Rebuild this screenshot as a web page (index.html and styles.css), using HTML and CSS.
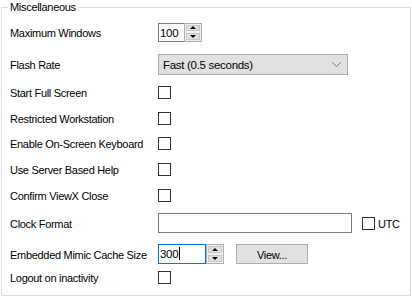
FILE: index.html
```html
<!DOCTYPE html>
<html lang="en">
<head>
    <meta charset="UTF-8">
    <meta name="viewport" content="width=device-width, initial-scale=1.0">
    <title>Miscellaneous</title>
    <link rel="stylesheet" href="styles.css">
</head>
<body>
    <fieldset class="group">
        <legend>Miscellaneous</legend>
        <div class="rows">
            <div class="row">
                <span class="label">Maximum Windows</span>
                <div class="spin">
                    <span class="spin-text">100</span>
                    <span class="spin-buttons">
                        <span class="spin-btn"><i class="arrow-up"></i></span>
                        <span class="spin-btn"><i class="arrow-down"></i></span>
                    </span>
                </div>
            </div>
            <div class="row">
                <span class="label">Flash Rate</span>
                <div class="combo">
                    <span>Fast (0.5 seconds)</span>
                    <svg class="chevron" width="9" height="5" viewBox="0 0 9 5"><polyline points="0.5,0.5 4.5,4.5 8.5,0.5" fill="none" stroke="#707070" stroke-width="1"/></svg>
                </div>
            </div>
            <div class="row">
                <span class="label">Start Full Screen</span>
                <span class="check"></span>
            </div>
            <div class="row">
                <span class="label">Restricted Workstation</span>
                <span class="check"></span>
            </div>
            <div class="row">
                <span class="label">Enable On-Screen Keyboard</span>
                <span class="check"></span>
            </div>
            <div class="row">
                <span class="label">Use Server Based Help</span>
                <span class="check"></span>
            </div>
            <div class="row">
                <span class="label">Confirm ViewX Close</span>
                <span class="check"></span>
            </div>
            <div class="row">
                <span class="label">Clock Format</span>
                <span class="textbox"></span>
                <span class="check check-utc"></span>
                <span class="check-label">UTC</span>
            </div>
            <div class="row">
                <span class="label">Embedded Mimic Cache Size</span>
                <div class="spin spin-wide">
                    <span class="spin-text focused">300<span class="caret"></span></span>
                    <span class="spin-buttons">
                        <span class="spin-btn"><i class="arrow-up"></i></span>
                        <span class="spin-btn"><i class="arrow-down"></i></span>
                    </span>
                </div>
                <button class="btn">View...</button>
            </div>
            <div class="row">
                <span class="label">Logout on inactivity</span>
                <span class="check"></span>
            </div>
        </div>
    </fieldset>
</body>
</html>
```

FILE: styles.css
```css
body {
    margin: 0;
    background: #ffffff;
    font-family: "Liberation Sans", Arial, sans-serif;
    font-size: 11px;
    letter-spacing: -0.3px;
    color: #000000;
}
.group {
    box-sizing: border-box;
    width: 410px;
    height: 295px;
    margin: 1px 0 0 1px;
    padding: 8px 6px 0 6px;
    border: 1px solid #dcdcdc;
}
.group legend {
    padding: 0 2px;
    line-height: 13px;
}
.rows {
    display: grid;
    grid-template-rows: 32px 28px 26px 25px 26px 26px 28px 31px 23px 20px;
    padding-left: 2px;
}
.row {
    display: flex;
    align-items: center;
    height: 20px;
    align-self: start;
}
.label {
    width: 148px;
    flex: none;
    line-height: 20px;
    padding-top: 2px;
}
.spin {
    display: flex;
    box-sizing: border-box;
    width: 44px;
    height: 19px;
    border: 1px solid #7a7a7a;
}
.spin-text {
    flex: 1;
    line-height: 17px;
    padding-left: 1px;
    padding-top: 1px;
    font-size: 11.5px;
}
.spin-buttons {
    display: flex;
    flex-direction: column;
    width: 16px;
    margin: -1px -1px -1px 0;
    border: 1px solid #adadad;
    background: #f0f0f0;
}
.spin-btn {
    flex: 1;
    display: flex;
    align-items: center;
    justify-content: center;
    margin: 1px;
    background: #e1e1e1;
    border: 1px solid #c8c8c8;
}
.arrow-up {
    width: 0;
    height: 0;
    border-left: 3px solid transparent;
    border-right: 3px solid transparent;
    border-bottom: 3px solid #000000;
}
.arrow-down {
    width: 0;
    height: 0;
    border-left: 3px solid transparent;
    border-right: 3px solid transparent;
    border-top: 3px solid #000000;
}
.spin-wide {
    width: 66px;
    height: 20px;
    border: none;
}
.spin-wide .spin-text {
    border: 1px solid #0078d7;
    line-height: 18px;
    padding-top: 0;
}
.spin-wide .spin-buttons {
    margin: 0;
}
.caret {
    display: inline-block;
    width: 1px;
    height: 13px;
    margin-left: 1px;
    vertical-align: -2px;
    background: #000000;
}
.combo {
    display: flex;
    align-items: center;
    justify-content: space-between;
    box-sizing: border-box;
    width: 190px;
    height: 21px;
    padding: 1px 6px 0 4px;
    background: #e1e1e1;
    border: 1px solid #adadad;
    font-size: 11.5px;
}
.check {
    box-sizing: border-box;
    width: 13px;
    height: 13px;
    border: 1px solid #333333;
    background: #ffffff;
}
.textbox {
    box-sizing: border-box;
    width: 194px;
    height: 20px;
    border: 1px solid #7a7a7a;
}
.check-utc {
    margin-left: 10px;
}
.check-label {
    margin-left: 3px;
    padding-top: 2px;
}
.btn {
    box-sizing: border-box;
    width: 72px;
    height: 20px;
    margin-left: 12px;
    padding: 1px 0 0 0;
    background: #e1e1e1;
    border: 1px solid #adadad;
    font-family: "Liberation Sans", Arial, sans-serif;
    font-size: 11px;
    letter-spacing: -0.3px;
    color: #000000;
}
```
